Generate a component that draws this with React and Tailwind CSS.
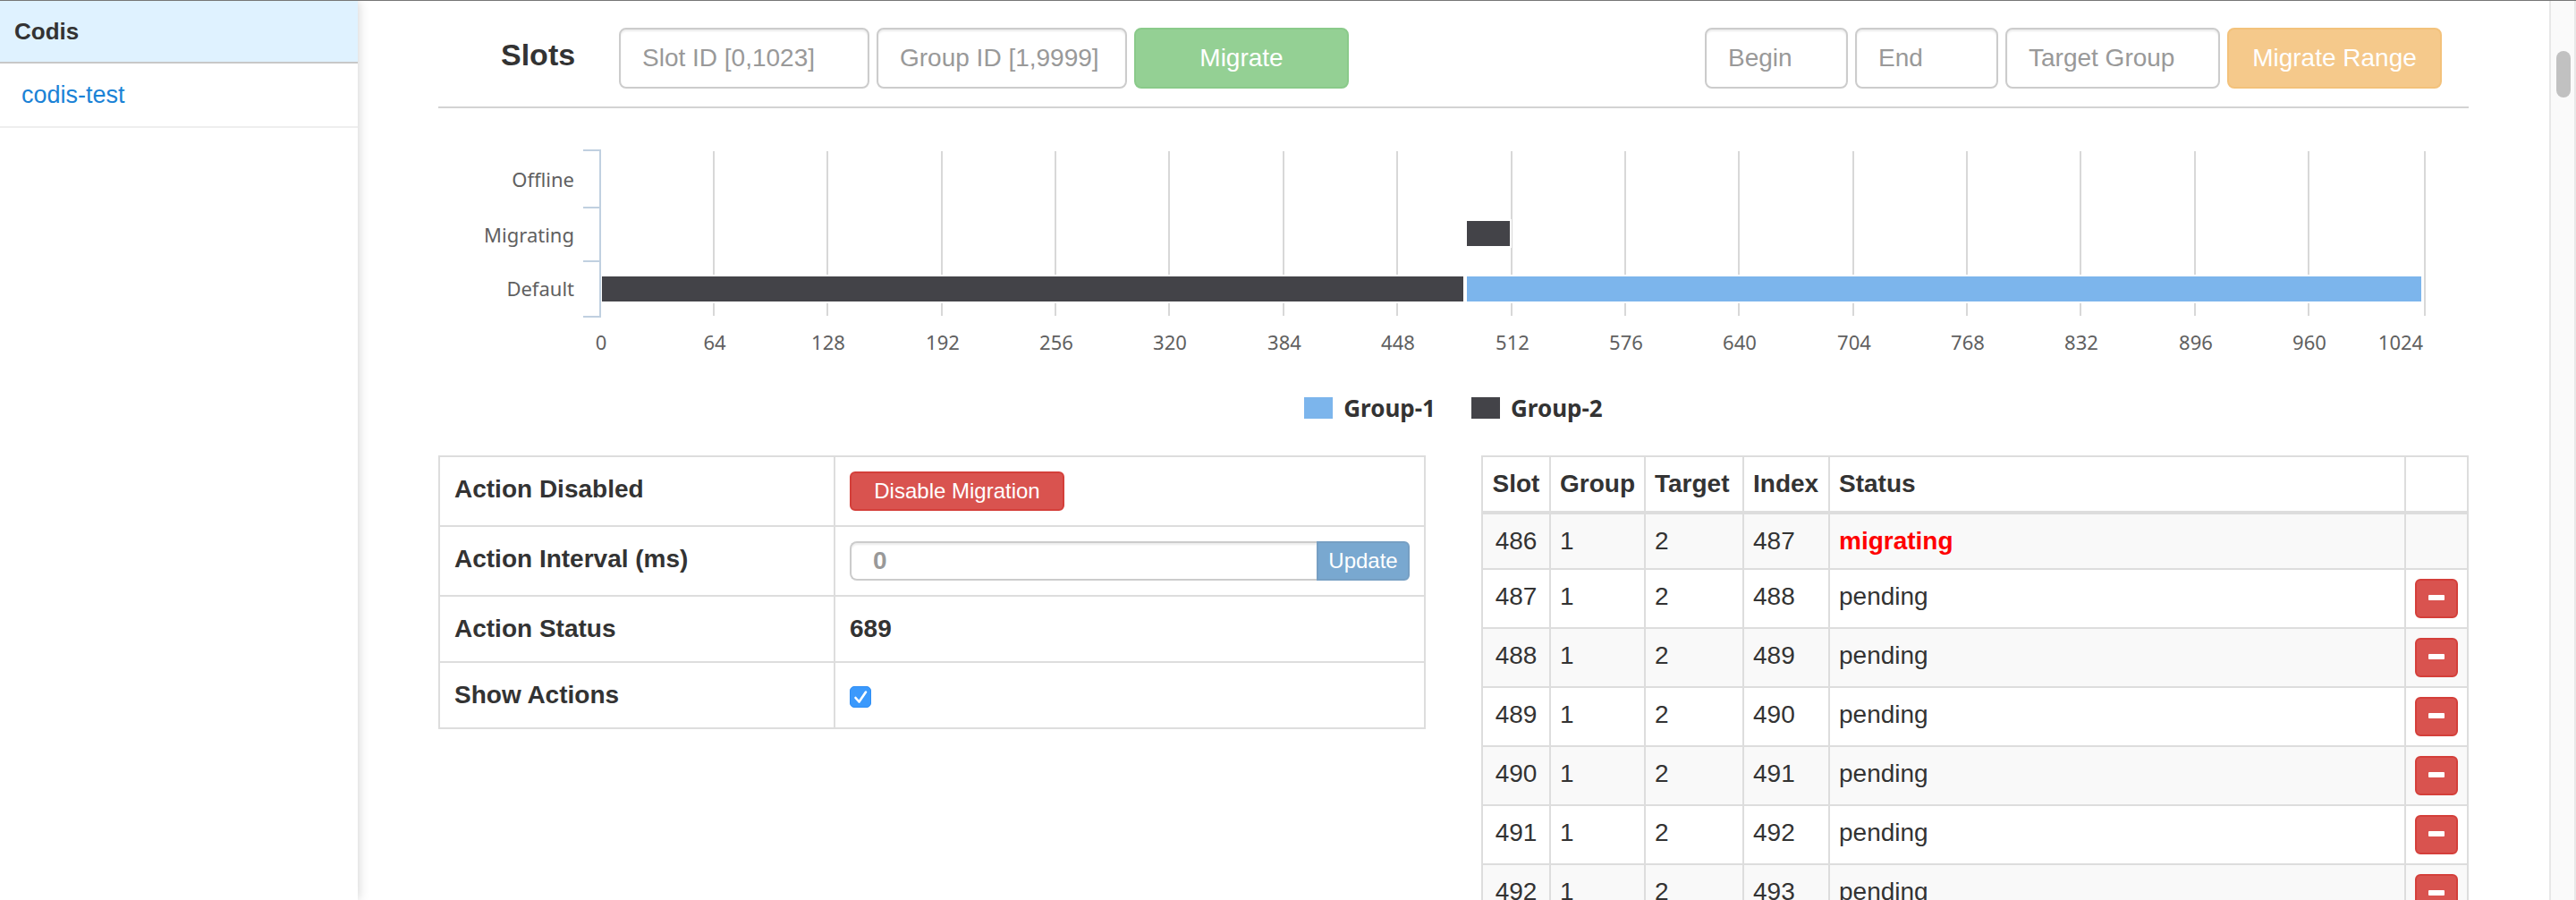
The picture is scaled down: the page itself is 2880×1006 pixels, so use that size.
import React, { useState } from "react";

const CONTROL =
  "h-[68px] min-w-0 rounded-lg border-2 border-[#ccc] bg-white px-6 text-[28px] text-[#555] placeholder:text-[#999] shadow-[inset_0_2px_2px_rgba(0,0,0,0.075)] outline-none";

const TICKS = Array.from({ length: 17 }, (_, i) => i * 64);

const SERIES = {
  "Group-1": "#7cb5ec",
  "Group-2": "#434348",
};

const BARS = [
  { row: "Default", group: "Group-2", x: 183, width: 963, y: 188 },
  { row: "Default", group: "Group-1", x: 1150, width: 1067, y: 188 },
  { row: "Migrating", group: "Group-2", x: 1150, width: 48, y: 126 },
];

const ACTIONS = Array.from({ length: 7 }, (_, i) => ({
  slot: 486 + i,
  group: 1,
  target: 2,
  index: 487 + i,
  status: i === 0 ? "migrating" : "pending",
}));

function Sidebar() {
  return (
    <nav className="relative z-10 w-[400px] shrink-0 bg-white text-[26px] leading-[36px] shadow-[0_0_12px_rgba(0,0,0,0.2)]">
      <h1 className="border-b-2 border-[#c8c8c8] bg-[#dff2ff] px-4 py-4 font-bold">Codis</h1>
      <a href="#codis-test" className="block border-b-2 border-[#eee] px-6 py-[17px] text-[27px] text-[#1a82d6]">
        codis-test
      </a>
    </nav>
  );
}

function Toolbar() {
  return (
    <header className="flex items-start justify-between border-b-2 border-[#d3d3d3] pt-[30px] pr-[30px] pb-5">
      <form className="flex gap-2">
        <h2 className="w-[194px] pl-[70px] text-[34px] leading-[60px] font-bold">Slots</h2>
        <input aria-label="Slot ID" placeholder="Slot ID [0,1023]" className={`${CONTROL} w-[280px]`} />
        <input aria-label="Group ID" placeholder="Group ID [1,9999]" className={`${CONTROL} w-[280px]`} />
        <button
          type="button"
          disabled
          className="h-[68px] w-60 rounded-lg border-2 border-[#4cae4c] bg-[#5cb85c] text-[28px] text-white opacity-65"
        >
          Migrate
        </button>
      </form>
      <form className="flex gap-2">
        <input aria-label="Begin" placeholder="Begin" className={`${CONTROL} w-40`} />
        <input aria-label="End" placeholder="End" className={`${CONTROL} w-40`} />
        <input aria-label="Target Group" placeholder="Target Group" className={`${CONTROL} w-60`} />
        <button
          type="button"
          disabled
          className="h-[68px] w-60 rounded-lg border-2 border-[#eea236] bg-[#f0ad4e] text-[28px] text-white opacity-65"
        >
          Migrate Range
        </button>
      </form>
    </header>
  );
}

function SlotChart() {
  const x = (v) => (v === 1024 ? 2221 : Math.floor(181 + (v / 1024) * 2038));
  return (
    <section className="font-['Noto_Sans',sans-serif]">
      <svg viewBox="0 0 2270 300" className="block w-full" role="img" aria-label="Slots by group">
        <g stroke="#d8d8d8" strokeWidth="2">
          {TICKS.slice(1).map((t) => (
            <line key={t} x1={x(t)} x2={x(t)} y1="48" y2="232" />
          ))}
        </g>
        <path d="M162 47H181V233H162M162 111H181M162 171H181" fill="none" stroke="#c0d0e0" strokeWidth="2" />
        {BARS.map((b) => (
          <g key={b.row + b.group}>
            <rect x={b.x - 1} y={b.y - 2} width={b.width + 3} height="32" fill="#fff" />
            <rect x={b.x} y={b.y} width={b.width} height="28" fill={SERIES[b.group]} />
          </g>
        ))}
        <g fill="#606060" fontSize="22" textAnchor="end">
          <text x="152" y="88">Offline</text>
          <text x="152" y="150">Migrating</text>
          <text x="152" y="210">Default</text>
        </g>
        <g fill="#606060" fontSize="22" textAnchor="middle">
          {TICKS.map((t) => (
            <text key={t} x={t === 1024 ? 2194 : x(t) + 1} y="270">
              {t}
            </text>
          ))}
        </g>
      </svg>
      <ul className="mt-[17px] flex h-9 items-center justify-center gap-10 text-[26px] leading-9 font-bold">
        {Object.entries(SERIES).map(([name, color]) => (
          <li key={name} className="flex items-center gap-3">
            <span className="h-6 w-8" style={{ backgroundColor: color }} />
            {name}
          </li>
        ))}
      </ul>
    </section>
  );
}

const SETTING = "border-2 border-[#ddd] p-4 text-left align-top font-bold";

function Settings() {
  const [shown, setShown] = useState(true);
  return (
    <table className="w-full table-fixed border-collapse">
      <colgroup>
        <col className="w-[442px]" />
        <col />
      </colgroup>
      <tbody>
        <tr>
          <th scope="row" className={SETTING}>Action Disabled</th>
          <td className={SETTING}>
            <button
              type="button"
              className="block h-11 w-60 rounded-md border-2 border-[#d43f3a] bg-[#d9534f] text-[24px] leading-9 font-normal text-white"
            >
              Disable Migration
            </button>
          </td>
        </tr>
        <tr>
          <th scope="row" className={SETTING}>
            <label htmlFor="interval">Action Interval (ms)</label>
          </th>
          <td className={SETTING}>
            <form className="flex">
              <input
                id="interval"
                placeholder="0"
                className="h-11 min-w-0 flex-1 rounded-l-lg border-2 border-r-0 border-[#ccc] px-6 font-bold shadow-[inset_0_2px_2px_rgba(0,0,0,0.075)] outline-none placeholder:text-[#999]"
              />
              <button
                type="button"
                disabled
                className="h-11 w-[104px] rounded-r-md border-2 border-[#2e6da4] bg-[#337ab7] text-[24px] leading-9 font-normal text-white opacity-65"
              >
                Update
              </button>
            </form>
          </td>
        </tr>
        <tr>
          <th scope="row" className={SETTING}>Action Status</th>
          <td className={SETTING}>689</td>
        </tr>
        <tr>
          <th scope="row" className={SETTING}>
            <label htmlFor="show-actions">Show Actions</label>
          </th>
          <td className={SETTING}>
            <span className="grid h-10 w-6 items-center pt-1">
              <input
                id="show-actions"
                type="checkbox"
                checked={shown}
                onChange={(e) => setShown(e.target.checked)}
                className="size-6 appearance-none rounded-[5px] border border-[#bbb] bg-white [grid-area:1/1] checked:border-[#2f8ef5] checked:bg-[#3b99fc]"
              />
              {shown && (
                <svg viewBox="0 0 24 24" className="pointer-events-none size-6 [grid-area:1/1]">
                  <path d="M6.5 13L10.5 17.5L18 6.5" fill="none" stroke="#fff" strokeWidth="2.6" strokeLinecap="round" strokeLinejoin="round" />
                </svg>
              )}
            </span>
          </td>
        </tr>
      </tbody>
    </table>
  );
}

const HEAD = "border-2 border-b-4 border-[#ddd] p-[10px] text-left font-bold";
const CELL = "border-2 border-[#ddd] p-[10px] align-top";

function ActionTable() {
  return (
    <table className="w-full table-fixed border-collapse">
      <colgroup>
        <col className="w-[76px]" />
        <col className="w-[106px]" />
        <col className="w-[110px]" />
        <col className="w-[96px]" />
        <col />
        <col className="w-[70px]" />
      </colgroup>
      <thead>
        <tr>
          <th className="border-2 border-b-4 border-[#ddd] py-[10px] text-center font-bold">Slot</th>
          <th className={HEAD}>Group</th>
          <th className={HEAD}>Target</th>
          <th className={HEAD}>Index</th>
          <th className={HEAD}>Status</th>
          <th className={HEAD} aria-label="Remove" />
        </tr>
      </thead>
      <tbody>
        {ACTIONS.map((a) => (
          <tr key={a.slot} className="odd:bg-[#f9f9f9]">
            <td className={`${CELL} text-center`}>{a.slot}</td>
            <td className={CELL}>{a.group}</td>
            <td className={CELL}>{a.target}</td>
            <td className={CELL}>{a.index}</td>
            <td className={CELL}>
              {a.status === "migrating" ? <strong className="font-bold text-[#f00]">migrating</strong> : a.status}
            </td>
            <td className={CELL}>
              {a.status === "pending" && (
                <button
                  type="button"
                  aria-label={`Remove slot ${a.slot}`}
                  className="flex h-11 w-12 items-center justify-center rounded-md border-2 border-[#d43f3a] bg-[#d9534f]"
                >
                  <svg viewBox="0 0 24 24" className="size-6">
                    <rect x="3" y="8" width="18" height="6" rx="1" fill="#fff" />
                  </svg>
                </button>
              )}
            </td>
          </tr>
        ))}
      </tbody>
    </table>
  );
}

export default function App() {
  return (
    <div className="flex h-screen overflow-hidden border-t border-[#777] bg-white font-['Liberation_Sans',Arial,sans-serif] text-[28px] leading-10 text-[#333]">
      <Sidebar />
      <main className="min-w-0 flex-1 px-[90px]">
        <Toolbar />
        <SlotChart />
        <div className="mt-[35px] grid grid-cols-2 items-start gap-[62px]">
          <Settings />
          <ActionTable />
        </div>
      </main>
      <div aria-hidden="true" className="w-[30px] shrink-0 border-x-2 border-[#e8e8e8] bg-[#fafafa] px-[6px] pt-14">
        <div className="h-[52px] w-4 rounded-full bg-[#c1c1c1]" />
      </div>
    </div>
  );
}
